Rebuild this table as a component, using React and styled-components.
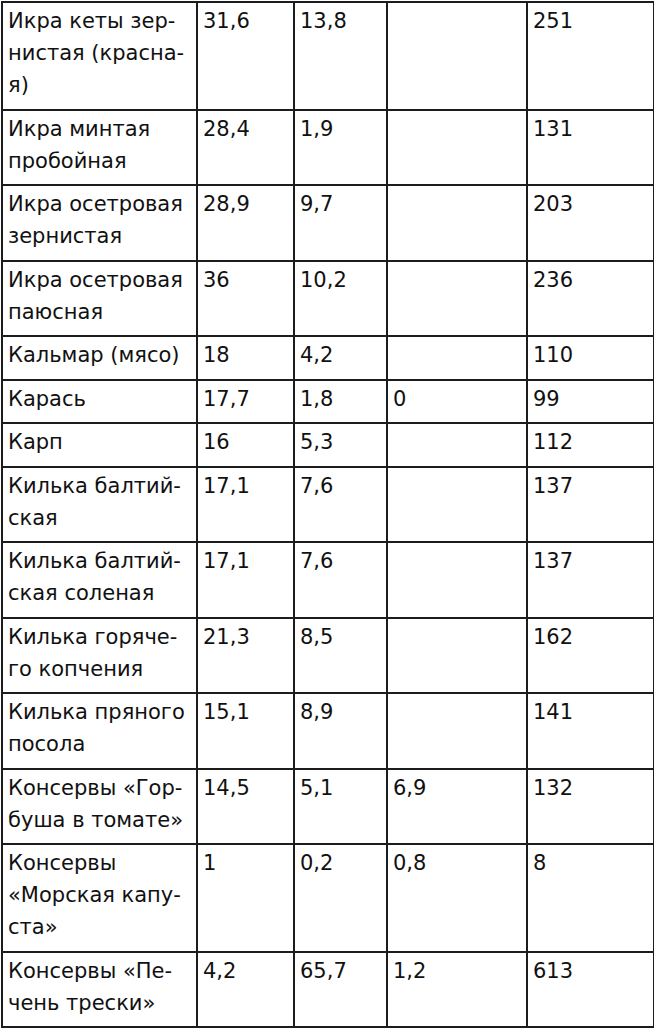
import React from "react";
import styled, { createGlobalStyle } from "styled-components";

const GlobalStyle = createGlobalStyle`
    html, body {
        margin: 0;
        padding: 0;
        background: #fff;
    }
`;

const Page = styled.div`
    padding: 1px 0 0 0;
    width: 654px;
`;

const Table = styled.table`
    border-collapse: collapse;
    width: 652px;
    table-layout: fixed;
    margin-left: 1px;
    font-family: "DejaVu Sans", Tahoma, Verdana, sans-serif;
    font-size: 21px;
    color: #111;
`;

const Cell = styled.td`
    border: 2px solid #1c1c1c;
    padding: 2px 4px 7.5px 5px;
    line-height: 32px;
    vertical-align: top;
    white-space: nowrap;
    overflow: hidden;
`;

const rows = [
    [["Икра кеты зер-", "нистая (красна-", "я)"], "31,6", "13,8", "", "251"],
    [["Икра минтая", "пробойная"], "28,4", "1,9", "", "131"],
    [["Икра осетровая", "зернистая"], "28,9", "9,7", "", "203"],
    [["Икра осетровая", "паюсная"], "36", "10,2", "", "236"],
    [["Кальмар (мясо)"], "18", "4,2", "", "110"],
    [["Карась"], "17,7", "1,8", "0", "99"],
    [["Карп"], "16", "5,3", "", "112"],
    [["Килька балтий-", "ская"], "17,1", "7,6", "", "137"],
    [["Килька балтий-", "ская соленая"], "17,1", "7,6", "", "137"],
    [["Килька горяче-", "го копчения"], "21,3", "8,5", "", "162"],
    [["Килька пряного", "посола"], "15,1", "8,9", "", "141"],
    [["Консервы «Гор-", "буша в томате»"], "14,5", "5,1", "6,9", "132"],
    [["Консервы", "«Морская капу-", "ста»"], "1", "0,2", "0,8", "8"],
    [["Консервы «Пе-", "чень трески»"], "4,2", "65,7", "1,2", "613"],
];

const widths = [195, 97, 93, 140, 127];

export default function App() {
    return (
        <Page>
            <GlobalStyle />
            <Table>
                <colgroup>
                    {widths.map((w, i) => (
                        <col key={i} style={{ width: w }} />
                    ))}
                </colgroup>
                <tbody>
                    {rows.map((row, i) => (
                        <tr key={i}>
                            <Cell>
                                {row[0].map((line, j) => (
                                    <React.Fragment key={j}>
                                        {j > 0 && <br />}
                                        {line}
                                    </React.Fragment>
                                ))}
                            </Cell>
                            {row.slice(1).map((v, j) => (
                                <Cell key={j}>{v}</Cell>
                            ))}
                        </tr>
                    ))}
                </tbody>
            </Table>
        </Page>
    );
}
